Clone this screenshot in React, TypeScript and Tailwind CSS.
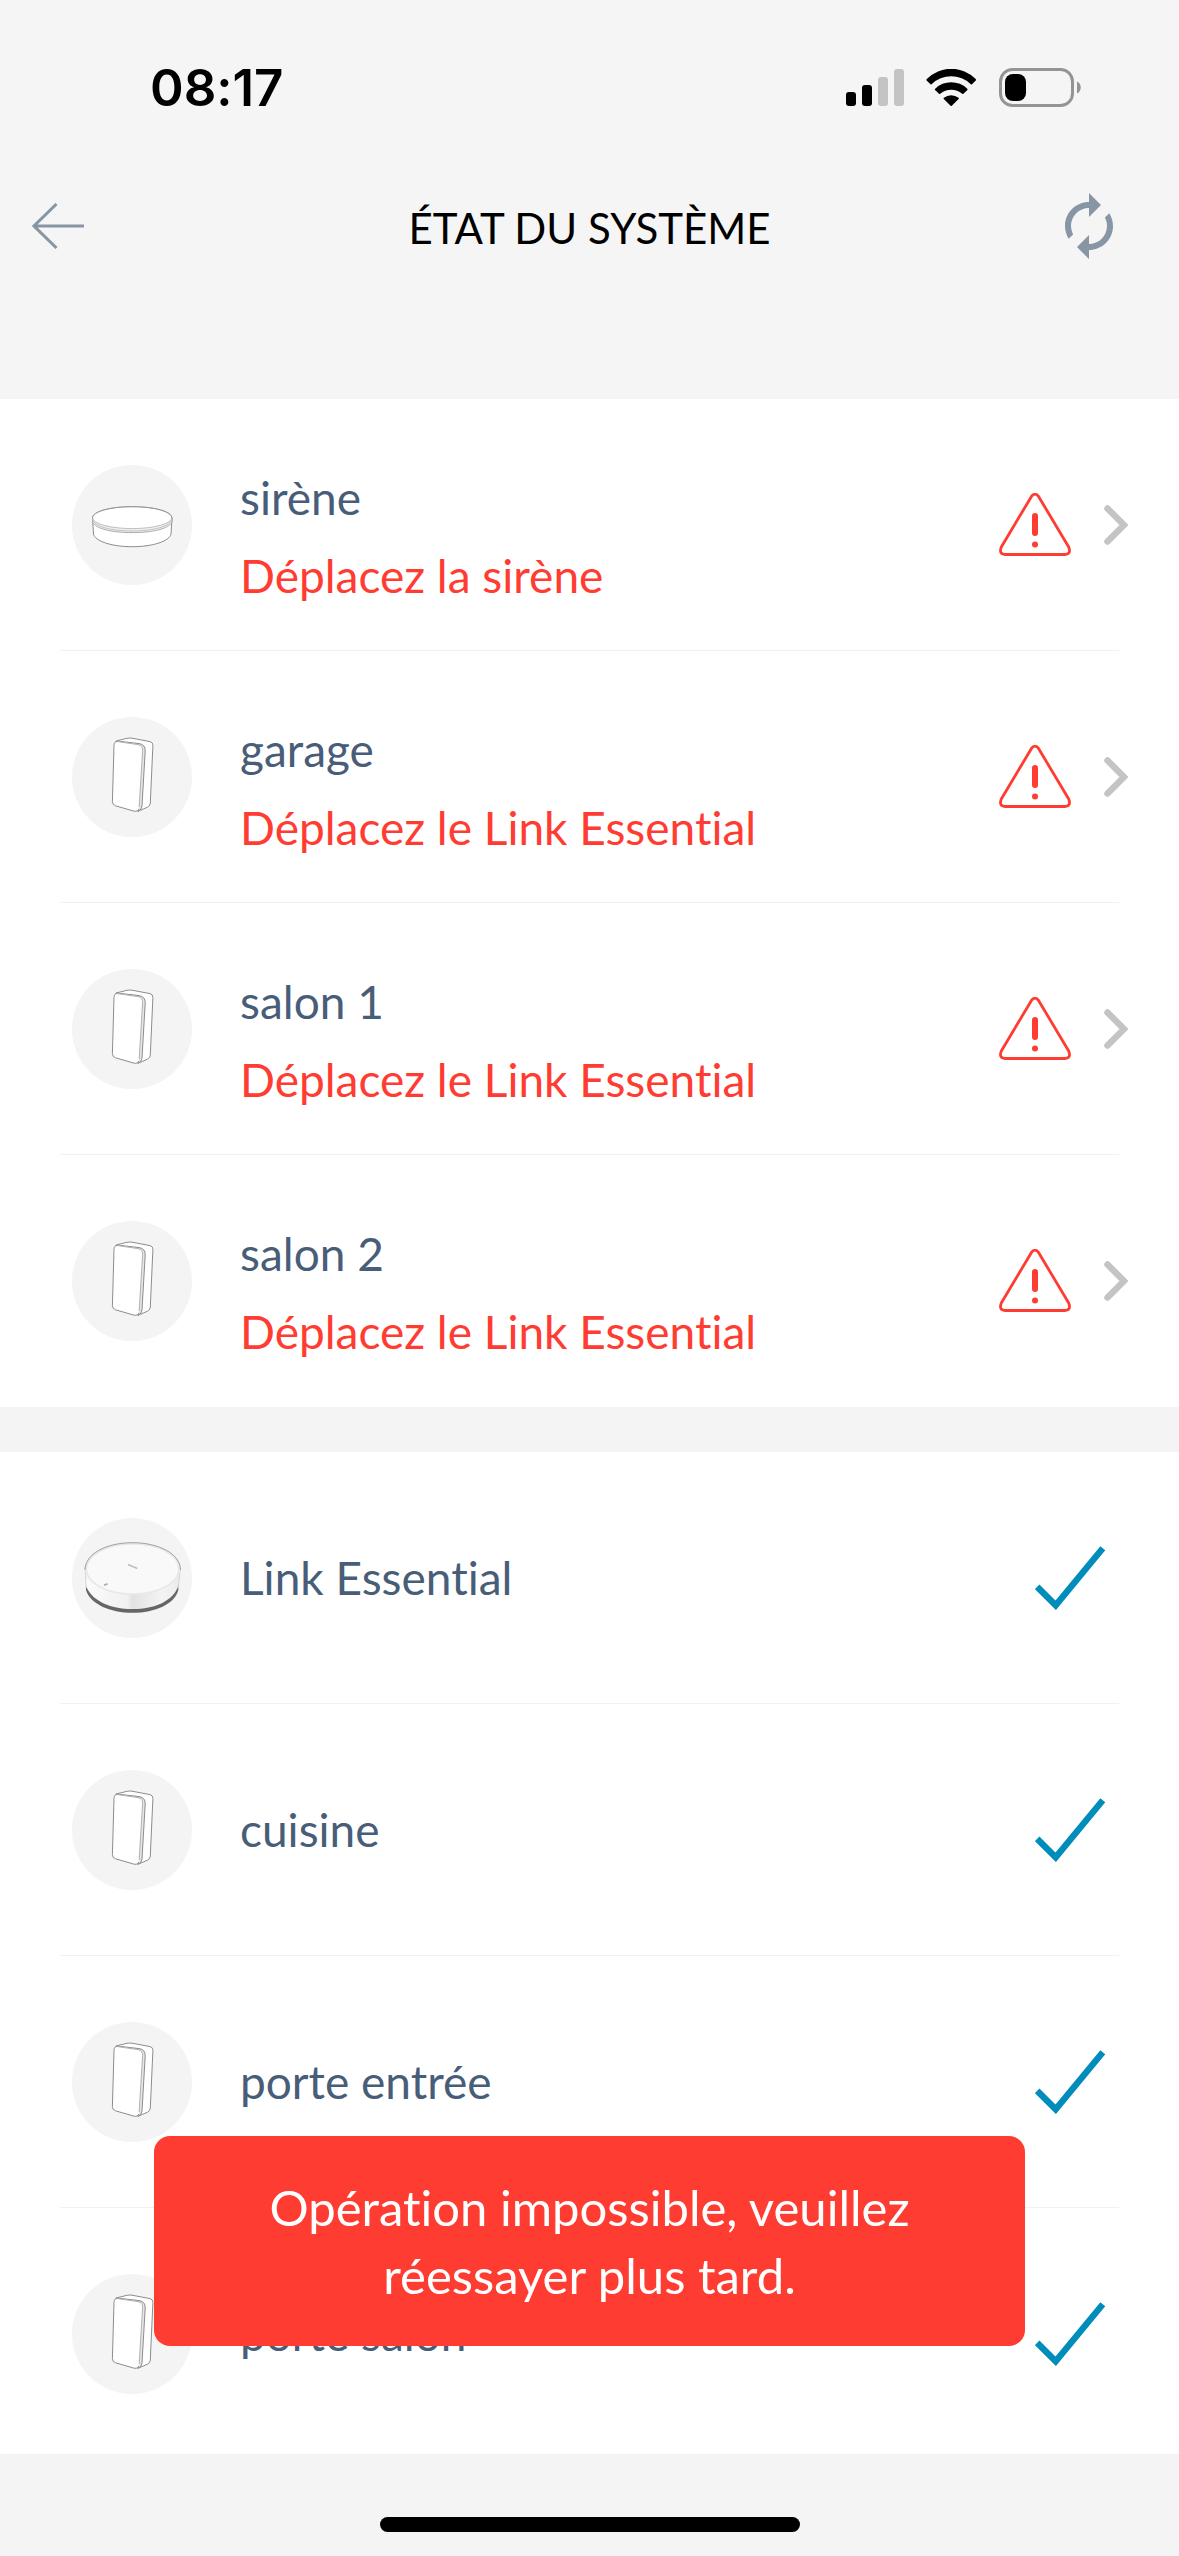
import React from 'react';
import { MdAutorenew } from 'react-icons/md';

type DeviceKind = 'siren' | 'sensor' | 'hub';

interface Device {
  name: string;
  kind: DeviceKind;
  error?: string;
}

const faultyDevices: Device[] = [
  { name: 'sirène', kind: 'siren', error: 'Déplacez la sirène' },
  { name: 'garage', kind: 'sensor', error: 'Déplacez le Link Essential' },
  { name: 'salon 1', kind: 'sensor', error: 'Déplacez le Link Essential' },
  { name: 'salon 2', kind: 'sensor', error: 'Déplacez le Link Essential' },
];

const healthyDevices: Device[] = [
  { name: 'Link Essential', kind: 'hub' },
  { name: 'cuisine', kind: 'sensor' },
  { name: 'porte entrée', kind: 'sensor' },
  { name: 'porte salon', kind: 'sensor' },
];

function SignalIcon() {
  return (
    <svg width="58" height="37" viewBox="0 0 58 37" aria-hidden="true">
      <rect x="0" y="23" width="10" height="14" rx="3" fill="#000" />
      <rect x="16" y="16" width="10" height="21" rx="3" fill="#000" />
      <rect x="32" y="8" width="10" height="29" rx="3" fill="#c4c4c4" />
      <rect x="48" y="0" width="10" height="37" rx="3" fill="#c4c4c4" />
    </svg>
  );
}

function WifiIcon() {
  return (
    <svg width="51" height="37" viewBox="0 0 51 37" aria-hidden="true">
      <path d="M0.6 11.5Q0 10.7 0.8 10A34.3 34.3 0 0 1 49.7 10Q50.4 10.7 49.8 11.5L46 15.3Q45.4 15.7 44.8 15.2A28.2 28.2 0 0 0 5.6 15.2Q5 15.7 4.5 15.3Z" />
      <path d="M9 20.9Q8.5 20.3 9.2 19.7A22.8 22.8 0 0 1 41.2 19.7Q41.9 20.3 41.4 20.9L37.4 24.8Q36.8 25.2 36.2 24.7A17 17 0 0 0 14.2 24.7Q13.6 25.2 13 24.8Z" />
      <path d="M17.8 30Q17.3 29.4 17.9 28.8A11.4 11.4 0 0 1 32.5 28.8Q33.1 29.4 32.6 30L25.8 36.7Q25.2 37.2 24.6 36.7Z" />
    </svg>
  );
}

function BatteryIcon() {
  return (
    <svg width="83" height="39" viewBox="0 0 83 39" aria-hidden="true">
      <rect x="1.5" y="1.5" width="72" height="36" rx="12" fill="none" stroke="#949494" strokeWidth="3" />
      <rect x="6" y="6" width="21" height="27" rx="8" fill="#000" />
      <path d="M78 13.5C83 15.5 83 23.5 78 25.5Z" fill="#949494" />
    </svg>
  );
}

function BackArrow() {
  return (
    <svg width="54" height="46" viewBox="0 0 54 46" fill="none" stroke="#8796a5" strokeWidth="3" aria-hidden="true">
      <path d="M52 23H1.5M24.5 1L2 23L24.5 45" />
    </svg>
  );
}

function WarningIcon() {
  return (
    <svg width="72" height="64" viewBox="0 0 72 64" fill="none" stroke="#ff3c32" aria-hidden="true">
      <path
        d="M32.6 3.2Q36 -0.8 39.4 3.2L69.7 54Q72.4 61.2 66 61.5H6Q-0.4 61.2 2.3 54Z"
        strokeWidth="2.8"
        strokeLinejoin="round"
      />
      <path d="M36 23V40" strokeWidth="6" strokeLinecap="round" />
      <circle cx="36" cy="51.5" r="3" fill="#ff3c32" stroke="none" />
    </svg>
  );
}

function ChevronIcon() {
  return (
    <svg width="24" height="40" viewBox="0 0 24 40" fill="none" stroke="#c4c4c6" strokeWidth="6.5" strokeLinecap="round" aria-hidden="true">
      <path d="M3.5 3.5L20 20L3.5 36.5" />
    </svg>
  );
}

function CheckIcon() {
  return (
    <svg width="71" height="64" viewBox="0 0 71 64" fill="none" stroke="#008dbb" strokeWidth="6.4" aria-hidden="true">
      <path d="M2.2 40.8L20.7 59.3L67.8 2.2" />
    </svg>
  );
}

function SirenDrawing() {
  return (
    <svg width="120" height="120" viewBox="0 0 120 120" fill="none" aria-hidden="true">
      <path d="M20.5 53L21.5 69C23 76 39 81.7 60.2 81.7S97.5 76 99 69L100 53Z" fill="#fff" stroke="#8c8c8c" />
      <path d="M20.5 53V57C24 64 40 67.6 60.2 67.6S96.5 64 100 57V53Z" fill="#f0f0f0" stroke="#a3a3a3" strokeWidth="0.9" />
      <path d="M20.5 54C22 61.5 39 66 60.2 66S98.5 61.5 100 54" stroke="#b5b5b5" strokeWidth="0.8" />
      <ellipse cx="60.2" cy="52.6" rx="39.7" ry="11" fill="#fff" stroke="#b0b0b0" strokeWidth="0.8" />
      <path d="M20.5 53C20.5 46.5 38 41.7 60.2 41.7S99.9 46.5 99.9 53" stroke="#909090" />
    </svg>
  );
}

function SensorDrawing() {
  return (
    <svg width="120" height="120" viewBox="0 0 120 120" fill="none" strokeLinejoin="round" aria-hidden="true">
      <path
        d="M44 24L55 21.3Q57.5 20.8 60 21.2L78 24.6Q81 25.2 80.9 28.5L78.3 86Q78.2 89 75.5 90.2L66 94.3Z"
        fill="#fff"
        stroke="#8c8c8c"
      />
      <path d="M45 24L67 26.6Q73.5 27.5 73.2 34L70 89Q69.6 93 66 94.4L62 60Z" fill="#e6e6e6" stroke="#8c8c8c" />
      <path
        d="M45.5 24.6L66 27.6Q70.8 28.4 70.6 33.5L67.2 90Q66.8 95 62.5 94.3L43.5 88.8Q40.3 87.8 40.4 84.5L42 28.5Q42.2 24.2 45.5 24.6Z"
        fill="#fff"
      />
      <path d="M45.5 24.6L66 27.6Q70.8 28.4 70.6 33.5L67.2 90" stroke="#b0b0b0" />
      <path d="M67 92Q66 94.9 62.5 94.3L43.5 88.8Q40.3 87.8 40.4 84.5L42 28.5Q42.2 24.2 45.5 24.3" stroke="#8c8c8c" />
    </svg>
  );
}

function HubDrawing() {
  return (
    <svg width="120" height="120" viewBox="0 0 120 120" fill="none" aria-hidden="true">
      <defs>
        <linearGradient id="hub-side" x1="0" x2="1" y1="0" y2="0">
          <stop offset="0" stopColor="#fbfbfb" />
          <stop offset="0.44" stopColor="#f1f1f1" />
          <stop offset="0.5" stopColor="#e2e2e2" />
          <stop offset="0.8" stopColor="#f4f4f4" />
          <stop offset="1" stopColor="#ebebeb" />
        </linearGradient>
      </defs>
      <path d="M14 66V72C18 86 38 94.8 60.5 94.8S103 86 106.3 72V66Z" fill="#666" />
      <path d="M12.9 50L14 68C20 83 38 91 60.5 91S101 83 106.3 68L108.5 50Z" fill="url(#hub-side)" />
      <path d="M13.2 50L14.2 70M108.4 50L106.2 70" stroke="#c9c9c9" strokeWidth="0.8" />
      <ellipse cx="60.7" cy="50.8" rx="47.8" ry="26.2" fill="#e9e9e9" />
      <ellipse cx="60.7" cy="51" rx="46" ry="24.8" fill="#f9f9f9" stroke="#e0e0e0" strokeWidth="0.6" />
      <path d="M13 52C13 36 34 24.7 60.5 24.7S108.5 36 108.5 52" stroke="#a0a0a0" />
      <path d="M56 46.5L65.3 50.5" stroke="#bdbdbd" strokeWidth="1.4" />
      <path d="M32.5 67L35 66" stroke="#a8a8a8" strokeWidth="1.6" strokeLinecap="round" />
    </svg>
  );
}

const drawings: Record<DeviceKind, React.ReactElement> = {
  siren: <SirenDrawing />,
  sensor: <SensorDrawing />,
  hub: <HubDrawing />,
};

function DeviceRow({ device }: { device: Device }) {
  const content = (
    <>
      <span className="size-[120px] shrink-0 rounded-full bg-[#f4f4f4]">{drawings[device.kind]}</span>
      <span className={device.error ? 'flex flex-1 flex-col pt-6' : 'flex flex-1 flex-col'}>
        <span className="text-[#485e78]">{device.name}</span>
        {device.error && <span className="text-[#ff3c32]">{device.error}</span>}
      </span>
    </>
  );

  if (device.error) {
    return (
      <button
        type="button"
        className="flex h-[251px] w-full items-center gap-12 pl-[72px] pr-[51px] text-left text-[46px] leading-[78px]"
      >
        {content}
        <span className="flex items-center gap-[33px]">
          <WarningIcon />
          <ChevronIcon />
        </span>
      </button>
    );
  }

  return (
    <div className="flex h-[251px] items-center gap-12 pl-[72px] pr-[73px] text-[46px] leading-[78px]">
      {content}
      <CheckIcon />
    </div>
  );
}

function DeviceList({ devices }: { devices: Device[] }) {
  return (
    <ul className="bg-white">
      {devices.map((device, index) => (
        <li key={device.name}>
          <DeviceRow device={device} />
          <div className={index < devices.length - 1 ? 'mx-[60px] h-px bg-[#f1f1f1]' : 'h-px'} />
        </li>
      ))}
    </ul>
  );
}

export default function App() {
  return (
    <div className="h-screen overflow-hidden bg-[#f4f4f4] font-['Lato',sans-serif] [font-variant-ligatures:none]">
      <header className="h-[399px] bg-[#f5f5f5]">
        <div className="flex h-[175px] items-center justify-between pl-[150px] pr-[97px]">
          <time className="font-['Inter',sans-serif] text-[51px] font-semibold leading-none">08:17</time>
          <div className="flex items-center gap-[22px]">
            <SignalIcon />
            <WifiIcon />
            <BatteryIcon />
          </div>
        </div>
        <div className="grid h-[102px] grid-cols-[1fr_auto_1fr] items-center">
          <button type="button" aria-label="Retour" className="justify-self-start pl-8">
            <BackArrow />
          </button>
          <h1 className="pt-1 text-[42px] leading-none text-black">ÉTAT DU SYSTÈME</h1>
          <button type="button" aria-label="Actualiser" className="justify-self-end pr-[54px]">
            <MdAutorenew className="size-[72px] text-[#8796a5]" />
          </button>
        </div>
      </header>

      <main className="flex flex-col gap-[45px]">
        <DeviceList devices={faultyDevices} />
        <DeviceList devices={healthyDevices} />
      </main>

      <div
        role="alert"
        className="fixed inset-x-[154px] bottom-[210px] rounded-2xl bg-[#ff3c32] px-[100px] py-[37px] text-center text-[49px] leading-[68px] text-white"
      >
        Opération impossible, veuillez réessayer plus tard.
      </div>

      <footer className="fixed inset-x-0 bottom-0 flex h-[102px] items-end justify-center bg-[#f4f4f4] pb-6">
        <div className="h-[15px] w-[420px] rounded-full bg-black" />
      </footer>
    </div>
  );
}
